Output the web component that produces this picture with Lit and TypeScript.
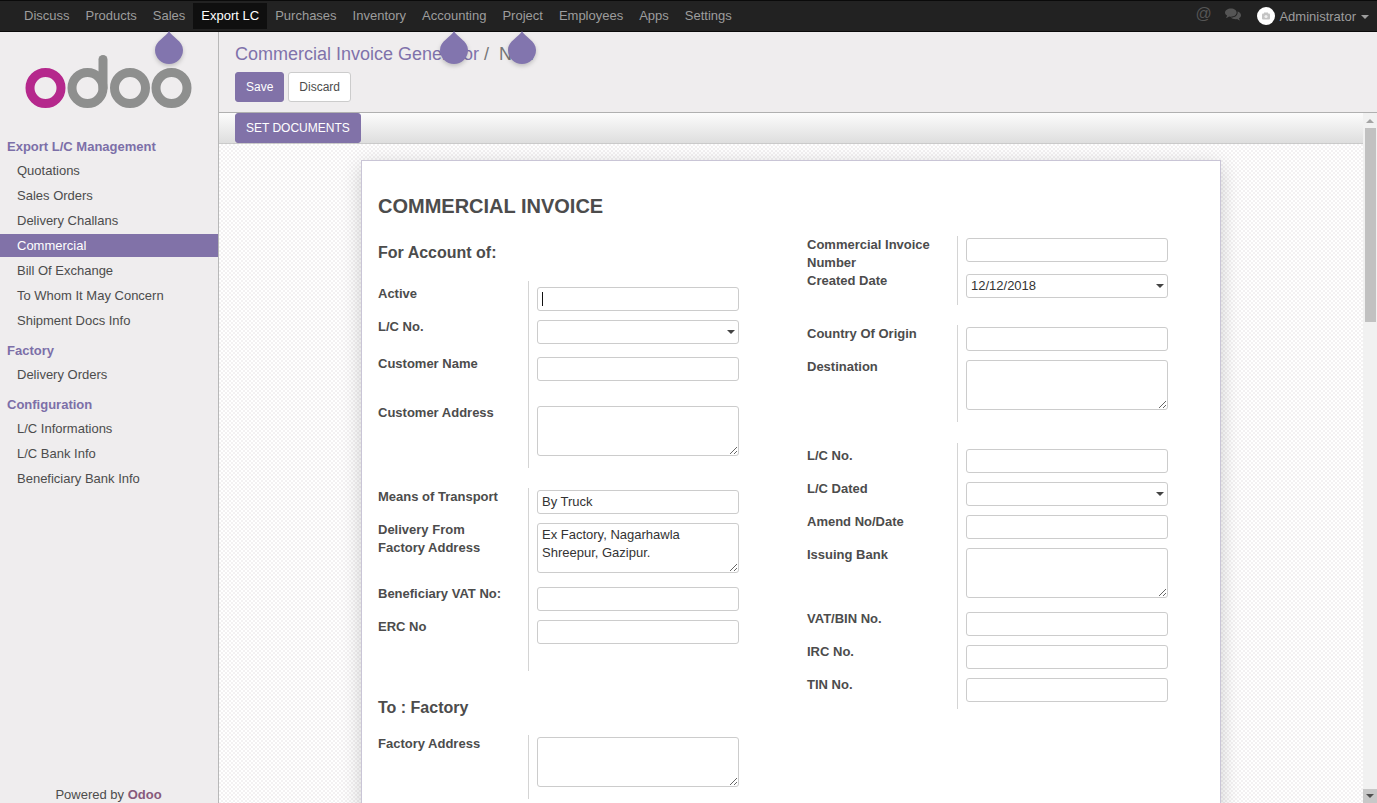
import { LitElement, html, css, svg } from "lit";
import { customElement } from "lit/decorators.js";

type Row = { label: string; kind: "input" | "select" | "area"; value?: string; gap: string; caret?: boolean };
type Group = { cls: string; rows: Row[] };

const navItems = ["Discuss", "Products", "Sales", "Export LC", "Purchases", "Inventory", "Accounting", "Project", "Employees", "Apps", "Settings"];

const menu = [
  { title: "Export L/C Management", items: ["Quotations", "Sales Orders", "Delivery Challans", "Commercial", "Bill Of Exchange", "To Whom It May Concern", "Shipment Docs Info"] },
  { title: "Factory", items: ["Delivery Orders"] },
  { title: "Configuration", items: ["L/C Informations", "L/C Bank Info", "Beneficiary Bank Info"] },
];

const leftA: Group[] = [
  {
    cls: "p6 e12 m20",
    rows: [
      { label: "Active", kind: "input", gap: "g9", caret: true },
      { label: "L/C No.", kind: "select", gap: "g13" },
      { label: "Customer Name", kind: "input", gap: "g25" },
      { label: "Customer Address", kind: "area", gap: "g0" },
    ],
  },
  {
    cls: "p2 e27",
    rows: [
      { label: "Means of Transport", kind: "input", value: "By Truck", gap: "g9" },
      { label: "Delivery From Factory Address", kind: "area", value: "Ex Factory, Nagarhawla\nShreepur, Gazipur.", gap: "g14" },
      { label: "Beneficiary VAT No:", kind: "input", gap: "g9" },
      { label: "ERC No", kind: "input", gap: "g0" },
    ],
  },
];

const leftB: Group[] = [{ cls: "p2 e12", rows: [{ label: "Factory Address", kind: "area", gap: "g0" }] }];

const right: Group[] = [
  {
    cls: "p2 e7 m20",
    rows: [
      { label: "Commercial Invoice Number", kind: "input", gap: "g2" },
      { label: "Created Date", kind: "select", value: "12/12/2018", gap: "g0" },
    ],
  },
  {
    cls: "p2 e12 m21",
    rows: [
      { label: "Country Of Origin", kind: "input", gap: "g9" },
      { label: "Destination", kind: "area", gap: "g0" },
    ],
  },
  {
    cls: "p6 e7",
    rows: [
      { label: "L/C No.", kind: "input", gap: "g9" },
      { label: "L/C Dated", kind: "select", gap: "g9" },
      { label: "Amend No/Date", kind: "input", gap: "g9" },
      { label: "Issuing Bank", kind: "area", gap: "g14" },
      { label: "VAT/BIN No.", kind: "input", gap: "g9" },
      { label: "IRC No.", kind: "input", gap: "g9" },
      { label: "TIN No.", kind: "input", gap: "g0" },
    ],
  },
];

const dropPath = svg`<path d="M14 0C17 6 28 10 28 19A14 14 0 0 1 0 19C0 10 11 6 14 0Z" fill="#8275ae"/>`;

@customElement("app-root")
export class AppRoot extends LitElement {
  static styles = css`
    :host {
      display: block;
      height: 100vh;
      overflow: hidden;
      position: relative;
      font-family: "Liberation Sans", Arial, sans-serif;
      font-size: 13px;
      color: #4c4c4c;
    }
    * { box-sizing: border-box; }
    .app { display: flex; flex-direction: column; height: 803px; }
    .topbar {
      flex: 0 0 32px;
      display: flex;
      align-items: center;
      padding: 0 8px 0 16px;
      background: #222;
      border-top: 1px solid #0a0a0a;
      border-bottom: 1px solid #0a0a0a;
      color: #9d9d9d;
    }
    .nav { padding: 0 8px; height: 26px; line-height: 25px; white-space: nowrap; }
    .nav.on { background: #0f0f0f; color: #fff; }
    .sys { margin-left: auto; display: flex; align-items: center; }
    .at { font-size: 16px; color: #555; width: 16px; margin-right: 14px; text-align: center; position: relative; top: -2px; }
    .chat { display: block; margin-right: 16px; position: relative; top: -1px; }
    .avatar { display: block; margin-right: 4px; }
    .caretdn { width: 0; height: 0; border: 4px solid transparent; border-top-color: #9d9d9d; border-bottom: 0; margin: 2px 0 0 5px; }
    .body { flex: 1; display: flex; min-height: 0; }

    .side {
      flex: 0 0 219px;
      display: flex;
      flex-direction: column;
      background: #efedee;
      border-right: 1px solid #b8b8b8;
    }
    .logo { display: block; flex: none; }
    .sec { height: 18px; line-height: 20px; margin: 0 0 4px; padding-left: 7px; font-weight: 700; font-size: 13px; color: #7c6fa8; }
    .items { display: flex; flex-direction: column; gap: 2px; }
    .item { height: 23px; line-height: 23px; padding-left: 17px; color: #4c4c4c; }
    .item.on { background: #8172a8; color: #fff; }
    .group-menu + .group-menu { margin-top: 9px; }
    .power { margin-top: auto; text-align: center; height: 17px; line-height: 17px; color: #4c4c4c; padding-right: 1px; }
    .power b { color: #875a7b; }

    .main { flex: 1; display: flex; flex-direction: column; min-width: 0; }
    .panel {
      flex: 0 0 81px;
      background: #efedee;
      border-bottom: 1px solid #b0b0b0;
      padding: 8px 16px 0;
    }
    .crumb { height: 26px; line-height: 28px; font-size: 18px; color: #777; white-space: nowrap; }
    .crumb a { color: #7f72ab; }
    .crumb .sep { margin: 0 10px 0 5px; }
    .btns { display: flex; gap: 4px; margin-top: 6px; }
    .btn {
      height: 30px;
      padding: 0 10px;
      border-radius: 3px;
      border: 1px solid #ccc;
      background: #fff;
      color: #4c4c4c;
      font: 12px "Liberation Sans", Arial, sans-serif;
    }
    .btn.pri { background: #8172a8; border-color: #8172a8; color: #fff; }
    .scrollwrap { flex: 1; display: flex; min-height: 0; }
    .content { flex: 1; min-width: 0; display: flex; flex-direction: column; overflow: hidden; }
    .status {
      flex: 0 0 31px;
      padding-left: 16px;
      background: linear-gradient(#fcfcfc, #dedede);
      border-bottom: 1px solid #cacaca;
    }
    .status .btn { display: block; height: 30px; }
    .bg {
      flex: 1;
      min-height: 0;
      overflow: hidden;
      padding: 16px 0 0 142px;
      background: conic-gradient(#f3f1f2 25%, #fff 0 50%, #f3f1f2 0 75%, #fff 0) 0 0 / 4px 4px;
    }
    .sheet {
      width: 860px;
      background: #fff;
      border: 1px solid #c9c5d6;
      box-shadow: 0 5px 20px -1px rgba(0, 0, 0, 0.2);
      padding: 32px 16px 0;
      min-height: 800px;
    }
    h1 { margin: 0 0 17px; height: 26px; line-height: 26px; font-size: 20px; font-weight: 700; color: #4c4c4c; }
    .cols { display: grid; grid-template-columns: 429px 1fr; }
    h2 { margin: 4px 0 17px; height: 24px; line-height: 26px; font-size: 16px; font-weight: 700; color: #4c4c4c; }
    h2.next { margin: 24px 0 16px; }
    .grp { background: linear-gradient(#d4d4d4, #d4d4d4) 150px 0 / 1px 100% no-repeat; }
    .p2 { padding-top: 2px; } .p6 { padding-top: 6px; }
    .e7 { padding-bottom: 7px; } .e12 { padding-bottom: 12px; } .e27 { padding-bottom: 27px; }
    .m20 { margin-bottom: 20px; } .m21 { margin-bottom: 21px; }
    .row { display: grid; grid-template-columns: 159px 202px; align-items: start; }
    .g0 { margin-bottom: 0; } .g2 { margin-bottom: 2px; } .g9 { margin-bottom: 9px; }
    .g13 { margin-bottom: 13px; } .g14 { margin-bottom: 14px; } .g25 { margin-bottom: 25px; }
    .lbl { display: block; margin-top: -2px; max-width: 130px; line-height: 18px; font-weight: 700; color: #4c4c4c; }
    .ctl { position: relative; display: block; }
    input, select, textarea {
      display: block;
      width: 202px;
      height: 24px;
      margin: 0;
      padding: 0 4px 1px;
      border: 1px solid #ccc;
      border-radius: 3px;
      background: #fff;
      color: #333;
      font: 13px/18px "Liberation Sans", Arial, sans-serif;
      outline: none;
    }
    select { appearance: none; -webkit-appearance: none; }
    textarea { height: 50px; padding: 2px 4px 0; resize: vertical; overflow: hidden; }
    .sel::after {
      content: "";
      position: absolute;
      right: 4px;
      top: 10px;
      border: 4px solid transparent;
      border-top-color: #444;
      border-bottom: 0;
    }
    .cursor { position: absolute; left: 5px; top: 5px; width: 1px; height: 14px; background: #111; }

    .sb { flex: 0 0 14px; display: flex; flex-direction: column; background: #f1f1f1; }
    .sb-up { flex: 0 0 15px; display: flex; align-items: center; justify-content: center; }
    .sb-up i { border: 4px solid transparent; border-bottom-color: #a3a3a3; border-top: 0; }
    .sb-thumb { flex: 0 0 194px; margin: 0 1px 0 2px; background: #c1c1c1; }
    .sb-dn { margin-top: auto; flex: 0 0 14px; display: flex; align-items: center; justify-content: center; background: #c8c8c8; }
    .sb-dn i { border: 4px solid transparent; border-top-color: #505050; border-bottom: 0; }

    .drop { position: absolute; top: 31px; display: block; filter: drop-shadow(0 2px 2px rgba(0, 0, 0, 0.2)); }
    .d1 { left: 155px; } .d2 { left: 440px; } .d3 { left: 508px; }
  `;

  private control(r: Row) {
    if (r.kind === "area") return html`<textarea .value=${r.value ?? ""}></textarea>`;
    if (r.kind === "select")
      return html`<span class="ctl sel"><select><option>${r.value ?? ""}</option></select></span>`;
    return html`<span class="ctl"><input .value=${r.value ?? ""} />${r.caret ? html`<span class="cursor"></span>` : ""}</span>`;
  }

  private group(g: Group) {
    return html`<div class="grp ${g.cls}">
      ${g.rows.map(
        (r) => html`<div class="row ${r.gap}"><label class="lbl">${r.label}</label>${this.control(r)}</div>`
      )}
    </div>`;
  }

  render() {
    return html`
      <div class="app">
        <header class="topbar">
          ${navItems.map((n) => html`<span class="nav ${n === "Export LC" ? "on" : ""}">${n}</span>`)}
          <div class="sys">
            <span class="at">@</span>
            <svg class="chat" width="16" height="14" viewBox="0 0 16 14">
              <path d="M6 0.5C9.3 0.5 11.6 2.2 11.6 4.6S9.3 8.7 6 8.7C5.3 8.7 4.7 8.6 4.1 8.5 3.2 9.2 2 9.7 0.8 9.9 1.5 9.2 2 8.4 2.1 7.6 0.8 6.9 0 5.8 0 4.6 0 2.2 2.7 0.5 6 0.5Z" fill="#555"/>
              <path d="M12.6 3.6C14.6 4.2 16 5.6 16 7.2 16 8.4 15.2 9.5 14 10.2 14.1 11 14.6 11.8 15.3 12.5 14.1 12.3 13 11.8 12.1 11.1 11.6 11.2 11 11.3 10.4 11.3 8.5 11.3 6.9 10.6 5.9 9.6 9.8 9.7 13.2 7.6 12.6 3.6Z" fill="#555"/>
            </svg>
            <svg class="avatar" width="18" height="18" viewBox="0 0 18 18">
              <circle cx="9" cy="9" r="9" fill="#fff"/>
              <rect x="5" y="6.5" width="8" height="6" rx="1" fill="#c4c4c4"/>
              <rect x="7" y="5.5" width="4" height="1.5" fill="#c4c4c4"/>
              <circle cx="9" cy="9.5" r="1.6" fill="#efefef"/>
            </svg>
            <span>Administrator</span>
            <span class="caretdn"></span>
          </div>
        </header>
        <div class="body">
          <aside class="side">
            <svg class="logo" width="218" height="105" viewBox="0 32 218 105" fill="none" stroke-width="9">
              <circle cx="45.5" cy="88" r="15.5" stroke="#b5288c"/>
              <circle cx="87.5" cy="88" r="15.5" stroke="#8e8f8e"/>
              <path d="M103 88V59.5" stroke="#8e8f8e" stroke-linecap="round"/>
              <circle cx="130" cy="88" r="15.5" stroke="#8e8f8e"/>
              <circle cx="171.5" cy="88" r="15.5" stroke="#8e8f8e"/>
            </svg>
            ${menu.map(
              (m) => html`<div class="group-menu">
                <div class="sec">${m.title}</div>
                <div class="items">
                  ${m.items.map((i) => html`<div class="item ${i === "Commercial" ? "on" : ""}">${i}</div>`)}
                </div>
              </div>`
            )}
            <div class="power">Powered by <b>Odoo</b></div>
          </aside>
          <main class="main">
            <div class="panel">
              <div class="crumb"><a>Commercial Invoice Generator</a><span class="sep">/</span><span>New</span></div>
              <div class="btns">
                <button class="btn pri">Save</button>
                <button class="btn">Discard</button>
              </div>
            </div>
            <div class="scrollwrap">
              <div class="content">
                <div class="status"><button class="btn pri">SET DOCUMENTS</button></div>
                <div class="bg">
                  <div class="sheet">
                    <h1>COMMERCIAL INVOICE</h1>
                    <div class="cols">
                      <div>
                        <h2>For Account of:</h2>
                        ${leftA.map((g) => this.group(g))}
                        <h2 class="next">To : Factory</h2>
                        ${leftB.map((g) => this.group(g))}
                      </div>
                      <div>${right.map((g) => this.group(g))}</div>
                    </div>
                  </div>
                </div>
              </div>
              <div class="sb">
                <div class="sb-up"><i></i></div>
                <div class="sb-thumb"></div>
                <div class="sb-dn"><i></i></div>
              </div>
            </div>
          </main>
        </div>
      </div>
      ${["d1", "d2", "d3"].map(
        (d) => html`<svg class="drop ${d}" width="28" height="33" viewBox="0 0 28 33">${dropPath}</svg>`
      )}
    `;
  }
}
